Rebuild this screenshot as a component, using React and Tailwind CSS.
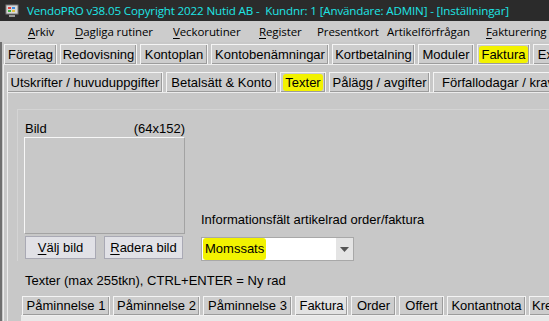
const sans = { fontFamily: '"Liberation Sans", Arial, sans-serif' };
const ui = { fontFamily: '"Open Sans", "Noto Sans", sans-serif' };

const topTabs = [
  { label: "Företag", w: 53 },
  { label: "Redovisning", w: 77 },
  { label: "Kontoplan", w: 68 },
  { label: "Kontobenämningar", w: 118 },
  { label: "Kortbetalning", w: 83 },
  { label: "Moduler", w: 56 },
  { label: "Faktura", w: 53, active: true },
  { label: "Extra", w: 40 },
];

const subTabs = [
  { label: "Utskrifter / huvuduppgifter", w: 156 },
  { label: "Betalsätt & Konto", w: 111 },
  { label: "Texter", w: 46, active: true },
  { label: "Pålägg / avgifter", w: 101 },
  { label: "Förfallodagar / krav", w: 130 },
];

const textTabs = [
  { label: "Påminnelse 1", w: 88 },
  { label: "Påminnelse 2", w: 87 },
  { label: "Påminnelse 3", w: 89 },
  { label: "Faktura", w: 53, selected: true },
  { label: "Order", w: 45 },
  { label: "Offert", w: 45 },
  { label: "Kontantnota", w: 79 },
  { label: "Kredit", w: 40 },
];

const menu = [
  { first: "A", rest: "rkiv", w: 47 },
  { first: "D", rest: "agliga rutiner", w: 98 },
  { first: "V", rest: "eckorutiner", w: 86 },
  { first: "R", rest: "egister", w: 58 },
  { first: "", rest: "Presentkort", w: 70 },
  { first: "", rest: "Artikelförfrågan", w: 99 },
  { first: "F", rest: "akturering", w: 70 },
];

export default function App() {
  return (
    <div className="h-[321px] w-[549px] overflow-hidden bg-[#c8c8c8] text-black" style={sans}>
      <TitleBar />
      <MenuBar />

      <div className="flex flex-col border-l-2 border-[#6e6e6e] pl-[1px]">
        <TabRow tabs={topTabs} className="mt-[2px] pl-[1px]" />
        <div className="flex flex-col border-l border-t border-[#ececec] pl-[3px] pt-[7px]">
          <TabRow tabs={subTabs} />
          <div className="flex flex-col border-l border-t border-[#ececec]">
            <Content />
          </div>
        </div>
      </div>
    </div>
  );
}

function TitleBar() {
  return (
    <div className="flex h-[21px] shrink-0 items-center bg-[#2b2b2b] pl-[5px]">
      <svg width="14" height="14" viewBox="0 0 14 14" className="shrink-0">
        <rect x="1" y="1" width="12" height="9" fill="#d8d8d8" stroke="#7a7a7a" />
        <rect x="3" y="3" width="3" height="2" fill="#e04040" />
        <rect x="7" y="3" width="3" height="2" fill="#3c8de0" />
        <rect x="3" y="6" width="3" height="2" fill="#40b040" />
        <rect x="7" y="6" width="3" height="2" fill="#e0c040" />
        <rect x="4" y="11" width="6" height="2" fill="#9a9a9a" />
      </svg>
      <span className="ml-[8px] whitespace-pre text-[11.6px] tracking-[-0.15px] text-[#1ee5e5]" style={ui}>
        VendoPRO v38.05 Copyright 2022 Nutid AB -  Kundnr: 1 [Användare: ADMIN] - [Inställningar]
      </span>
    </div>
  );
}

function MenuBar() {
  return (
    <div className="flex h-[21px] shrink-0 items-center bg-[#cccccc] pl-[28px] text-[11.5px] tracking-[-0.1px]" style={ui}>
      {menu.map((item) => (
        <span key={item.rest} style={{ width: item.w }} className="shrink-0 whitespace-nowrap">
          {item.first && <span className="underline underline-offset-2">{item.first}</span>}
          {item.rest}
        </span>
      ))}
    </div>
  );
}

function TabRow({ tabs, className = "" }) {
  return (
    <div className={`flex h-[20px] shrink-0 gap-[3px] ${className}`}>
      {tabs.map((tab) => (
        <div
          key={tab.label}
          style={{ width: tab.w }}
          className="flex shrink-0 items-center justify-center border border-b-0 border-[#f4f4f4] bg-[#cdcdcd] text-[13px] shadow-[inset_-1px_-1px_0_#9c9c9c]"
        >
          {tab.active ? (
            <span className="rounded-[3px] bg-[#f2f200] px-[2px] leading-[17px]">{tab.label}</span>
          ) : (
            <span className="whitespace-nowrap">{tab.label}</span>
          )}
        </div>
      ))}
    </div>
  );
}

function Content() {
  return (
    <div className="flex flex-col pl-[9px] pt-[16px] text-[13px]">
      <div className="flex border-l border-t border-[#d4d4d4] pl-[6px] pt-[11px]">
        <div className="flex w-[161px] shrink-0 flex-col">
          <div className="flex h-[14px] items-center justify-between pl-[1px] leading-none">
            <span>Bild</span>
            <span>(64x152)</span>
          </div>
          <div className="mt-[2px] h-[97px] border border-b-[#a3a3a3] border-l-[#f7f7f7] border-r-[#a3a3a3] border-t-[#f7f7f7]" />
          <div className="mt-[2px] flex gap-[8px] pl-[1px]">
            <Button first="V" rest="älj bild" w={71} />
            <Button first="R" rest="adera bild" w={79} />
          </div>
        </div>

        <div className="ml-[16px] flex flex-col pt-[92px]">
          <span className="whitespace-nowrap leading-[14px]">Informationsfält artikelrad order/faktura</span>
          <div className="mt-[10px] flex h-[24px] w-[153px] items-center border border-[#a8a8a8] bg-white pl-[1px]">
            <span className="flex h-[22px] items-center rounded-[3px] bg-[#f2f200] px-[2px]">Momssats</span>
            <div className="ml-auto flex h-[22px] w-[17px] items-center justify-center bg-[#e4e4e4]">
              <svg width="9" height="5" viewBox="0 0 9 5">
                <path d="M0 0h9L4.5 5z" fill="#555" />
              </svg>
            </div>
          </div>
        </div>
      </div>

      <div className="mt-[13px] pl-[8px] leading-[14px]">Texter (max 255tkn), CTRL+ENTER = Ny rad</div>

      <div className="mt-[8px] flex gap-[3px] pl-[5px]">
        {textTabs.map((tab) => (
          <div
            key={tab.label}
            style={{ width: tab.w }}
            className={`flex h-[19px] shrink-0 items-center justify-center border border-b-0 border-[#f4f4f4] shadow-[inset_-1px_-1px_0_#9c9c9c] ${
              tab.selected ? "bg-[#e2e2e2]" : "bg-[#cdcdcd]"
            }`}
          >
            <span className="whitespace-nowrap">{tab.label}</span>
          </div>
        ))}
      </div>
      <div className="ml-[4px] h-[10px] border-t border-[#f0f0f0] bg-[#e8e8e8]" />
    </div>
  );
}

function Button({ first, rest, w }) {
  return (
    <div style={{ width: w }} className="flex h-[23px] items-center justify-center border border-[#a9a9b4] bg-[#e1e1e6]">
      <span>
        <span className="underline underline-offset-2">{first}</span>
        {rest}
      </span>
    </div>
  );
}
